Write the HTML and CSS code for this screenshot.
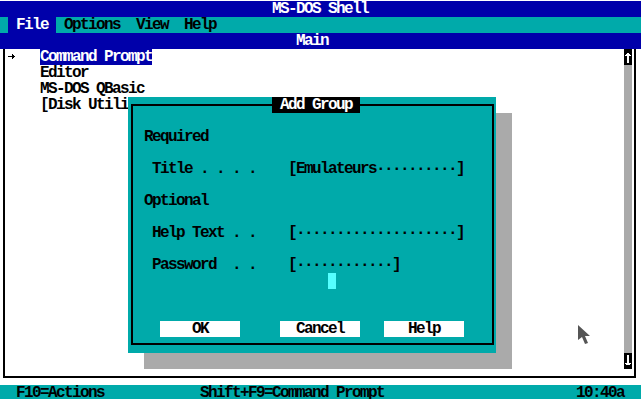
FILE: index.html
```html
<!DOCTYPE html>
<html lang="en">
<head>
    <meta charset="UTF-8">
    <title>MS-DOS Shell</title>
    <link rel="stylesheet" href="styles.css">
</head>
<body>

<div id="screen">
    <div id="titlebar">MS-DOS Shell</div>

    <div id="menubar">
        <span class="menu-item active">File</span>
        <span class="menu-item">Options</span>
        <span class="menu-item">View</span>
        <span class="menu-item">Help</span>
    </div>

    <div id="panel-title">Main</div>

    <div id="panel">
        <div id="program-list">
            <div class="item">
                <span class="marker"><svg width="8" height="16" viewBox="0 0 8 16"><path d="M0 7h5v1h-5z M4 5h1v5h-1z M5 6h1v3h-1z M6 7h1v1h-1z" fill="#000"/></svg></span>
                <span class="label selected">Command Prompt</span>
            </div>
            <div class="item"><span class="marker"></span><span class="label">Editor</span></div>
            <div class="item"><span class="marker"></span><span class="label">MS-DOS QBasic</span></div>
            <div class="item"><span class="marker"></span><span class="label">[Disk Utilities]</span></div>
        </div>
        <div id="scrollbar">
            <div class="scroll-arrow">
                <svg width="8" height="16" viewBox="0 0 8 16"><path d="M3 4h2v10h-2z M2 5h4v1h-4z M1 6h6v1h-6z" fill="#fff"/></svg>
            </div>
            <div class="scroll-track"></div>
            <div class="scroll-arrow">
                <svg width="8" height="16" viewBox="0 0 8 16"><path d="M3 2h2v10h-2z M2 11h4v1h-4z M1 10h6v1h-6z" fill="#fff"/></svg>
            </div>
        </div>
    </div>

    <div id="statusbar">
        <span class="status-left">F10=Actions</span>
        <span class="status-mid">Shift+F9=Command Prompt</span>
        <span class="status-clock">10:40a</span>
    </div>

    <!-- Add Group dialog sits over the program list -->
    <div id="dialog-shadow"></div>
    <div id="dialog">
        <div id="dialog-frame">
            <div class="form">
                <div class="section">Required</div>
                <div class="field-row">
                    <span class="field-label">Title . . . .</span>
                    <span class="field">[Emulateurs··········]</span>
                </div>
                <div class="section">Optional</div>
                <div class="field-row">
                    <span class="field-label">Help Text . .</span>
                    <span class="field">[····················]</span>
                </div>
                <div class="field-row">
                    <span class="field-label">Password  . .</span>
                    <span class="field">[············]</span>
                </div>
                <div class="cursor-row"><span class="cursor"></span></div>
                <div class="buttons">
                    <span class="button ok">OK</span>
                    <span class="button cancel">Cancel</span>
                    <span class="button help">Help</span>
                </div>
            </div>
        </div>
        <div id="dialog-title">Add Group</div>
    </div>

    <svg id="mouse" width="16" height="22" viewBox="0 0 16 22">
        <path d="M0 0 L0 15 L4 12 L7 19 L10 18 L7 11 L12 11 Z" fill="#555"/>
    </svg>
</div>

</body>
</html>
```

FILE: styles.css
```css
body {
    margin: 0;
    background: #fff;
    font-family: 'Liberation Mono', 'DejaVu Sans Mono', monospace;
    font-weight: bold;
    font-size: 16px;
    letter-spacing: -1.6px;
    line-height: 16px;
    color: #000;
    overflow: hidden;
}

#screen {
    position: relative;
    width: 641px;
    height: 399px;
    padding-top: 1px;
    box-sizing: border-box;
    overflow: hidden;
}

#titlebar {
    height: 16px;
    background: #0000AA;
    color: #fff;
    text-align: center;
    padding-right: 1px;
}

#menubar {
    display: flex;
    height: 16px;
    background: #00AAAA;
    padding-left: 8px;
}

.menu-item {
    padding: 0 8px;
}

.menu-item.active {
    background: #0000AA;
    color: #fff;
}

#panel-title {
    height: 16px;
    background: #0000AA;
    color: #fff;
    text-align: center;
    padding-right: 17px;
}

#panel {
    display: flex;
    height: 327px;
    margin: 0 5px 0 3px;
    border-left: 2px solid #000;
    border-right: 2px solid #000;
    border-bottom: 2px solid #000;
}

#program-list {
    flex: 1;
    padding-left: 3px;
}

.item {
    display: flex;
    height: 16px;
}

.marker {
    width: 32px;
    height: 16px;
}

.marker svg {
    display: block;
}

.label {
    white-space: pre;
}

.label.selected {
    background: #0000AA;
    color: #fff;
}

#scrollbar {
    display: flex;
    flex-direction: column;
    width: 8px;
    height: 320px;
    margin-right: 2px;
}

.scroll-arrow {
    height: 16px;
    background: #000;
}

.scroll-arrow svg {
    display: block;
}

.scroll-track {
    flex: 1;
    background: #AAAAAA;
}

#statusbar {
    display: flex;
    height: 16px;
    margin-top: 7px;
    background: #00AAAA;
    padding-left: 16px;
    white-space: pre;
}

.status-left {
    width: 184px;
}

.status-mid {
    flex: 1;
}

.status-clock {
    padding-right: 17px;
}

#dialog-shadow {
    position: absolute;
    left: 144px;
    top: 113px;
    width: 368px;
    height: 256px;
    background: #AAAAAA;
}

#dialog {
    position: absolute;
    left: 128px;
    top: 97px;
    width: 368px;
    height: 256px;
    box-sizing: border-box;
    padding: 7px 2px 8px 3px;
    background: #00AAAA;
}

#dialog-frame {
    height: 100%;
    box-sizing: border-box;
    border: 2px solid #000;
}

#dialog-title {
    position: absolute;
    top: 0;
    left: 144px;
    height: 16px;
    padding: 0 8px;
    background: #000;
    color: #fff;
    white-space: pre;
}

.form {
    display: flex;
    flex-direction: column;
    padding: 23px 0 0 11px;
}

.section {
    height: 16px;
}

.section + .field-row,
.field-row + .section,
.field-row + .field-row {
    margin-top: 16px;
}

.field-row {
    display: flex;
    height: 16px;
    white-space: pre;
}

.field-label {
    width: 136px;
    padding-left: 8px;
}

.cursor-row {
    height: 16px;
    padding-left: 184px;
}

.cursor {
    display: block;
    width: 8px;
    height: 16px;
    background: #55FFFF;
}

.buttons {
    display: flex;
    margin-top: 32px;
    padding-left: 16px;
}

.button {
    width: 80px;
    height: 16px;
    background: #fff;
    text-align: center;
}

.cancel {
    margin-left: 40px;
}

.help {
    margin-left: 24px;
}

#mouse {
    position: absolute;
    left: 578px;
    top: 325px;
}
```
